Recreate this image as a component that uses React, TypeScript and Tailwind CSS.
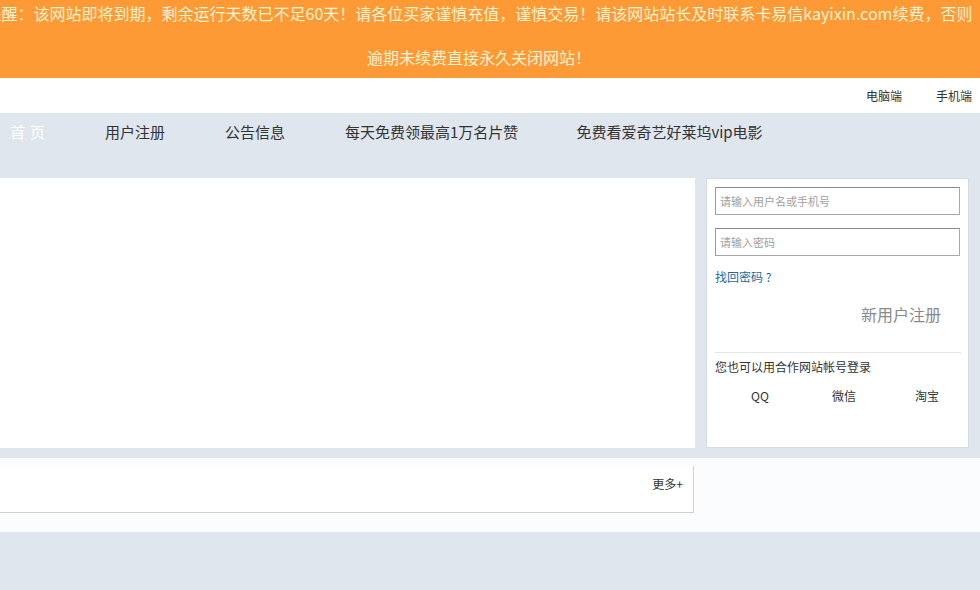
const NAV_ITEMS = ["用户注册", "公告信息", "每天免费领最高1万名片赞", "免费看爱奇艺好莱坞vip电影"];

function LoginBox() {
  return (
    <div className="w-[263px] h-[270px] ml-[11px] bg-white border border-[#d3dbe3] px-[8px] pt-[8px]">
      <input
        className="block w-[245px] h-[28px] border border-[#a8a8a8] border-t-[#8a8a8a] border-l-[#999] px-[4px] text-[11px] text-[#333] placeholder:text-[#a0a0a0] outline-none"
        placeholder="请输入用户名或手机号"
      />
      <input
        type="password"
        className="block mt-[13px] w-[245px] h-[28px] border border-[#a8a8a8] border-t-[#8a8a8a] border-l-[#999] px-[4px] text-[11px] text-[#333] placeholder:text-[#a0a0a0] outline-none"
        placeholder="请输入密码"
      />
      <div className="mt-[13px] text-[12px] leading-[16px] text-[#1b6a9a]">找回密码 ?</div>
      <div className="mt-[18px] pr-[19px] text-right text-[16px] leading-[22px] text-[#8a8a8a]">新用户注册</div>
      <div className="mt-[27px] w-[246px] border-t border-[#e4e4e4]" />
      <div className="mt-[6px] text-[12px] leading-[16px] text-[#333]">您也可以用合作网站帐号登录</div>
      <div className="mt-[13px] flex text-[12px] leading-[16px] text-[#333]">
        <span className="w-[90px] shrink-0 text-center">QQ</span>
        <span className="w-[78px] shrink-0 text-center">微信</span>
        <span className="w-[88px] shrink-0 text-center">淘宝</span>
      </div>
    </div>
  );
}

export default function App() {
  return (
    <div
      className="w-full h-[590px] overflow-hidden bg-[#dfe6ee]"
      style={{ fontFamily: '"Noto Sans CJK SC", "Noto Sans", sans-serif' }}
    >
      {/* Expiry banner */}
      <div className="h-[78px] overflow-hidden bg-[#fe9a36] text-[16px] leading-[22px] text-[#fff4d2] pr-[22px]">
        <div className="flex justify-center whitespace-nowrap pt-[2px]">
          提醒：该网站即将到期，剩余运行天数已不足60天！请各位买家谨慎充值，谨慎交易！请该网站站长及时联系卡易信kayixin.com续费，否则
        </div>
        <div className="flex justify-center whitespace-nowrap mt-[22px]">逾期未续费直接永久关闭网站！</div>
      </div>

      {/* Top links */}
      <div className="h-[35px] bg-white flex items-center justify-end gap-[34px] pr-[8px] text-[12px] text-[#333]">
        <span>电脑端</span>
        <span>手机端</span>
      </div>

      {/* Nav */}
      <div className="h-[65px]">
        <ul className="flex gap-[60px] pl-[10px] h-[38px] items-center text-[15px] text-[#333]">
          <li className="text-white tracking-[5px] mr-[-5px]">首页</li>
          <li>{NAV_ITEMS[0]}</li>
          <li>{NAV_ITEMS[1]}</li>
          <li>{NAV_ITEMS[2]}</li>
          <li className="ml-[-2px]">{NAV_ITEMS[3]}</li>
        </ul>
      </div>

      {/* Main row */}
      <div className="flex">
        <div className="w-[695px] h-[270px] bg-white" />
        <LoginBox />
      </div>

      {/* Notice strip */}
      <div className="mt-[10px] h-[74px] bg-[#fbfcfd] pt-[8px]">
        <div className="w-[694px] h-[47px] bg-white border-r border-b border-[#c9d3dc] flex justify-end pt-[10px] pr-[10px]">
          <span className="text-[12px] leading-[16px] text-[#333]">更多+</span>
        </div>
      </div>
    </div>
  );
}
